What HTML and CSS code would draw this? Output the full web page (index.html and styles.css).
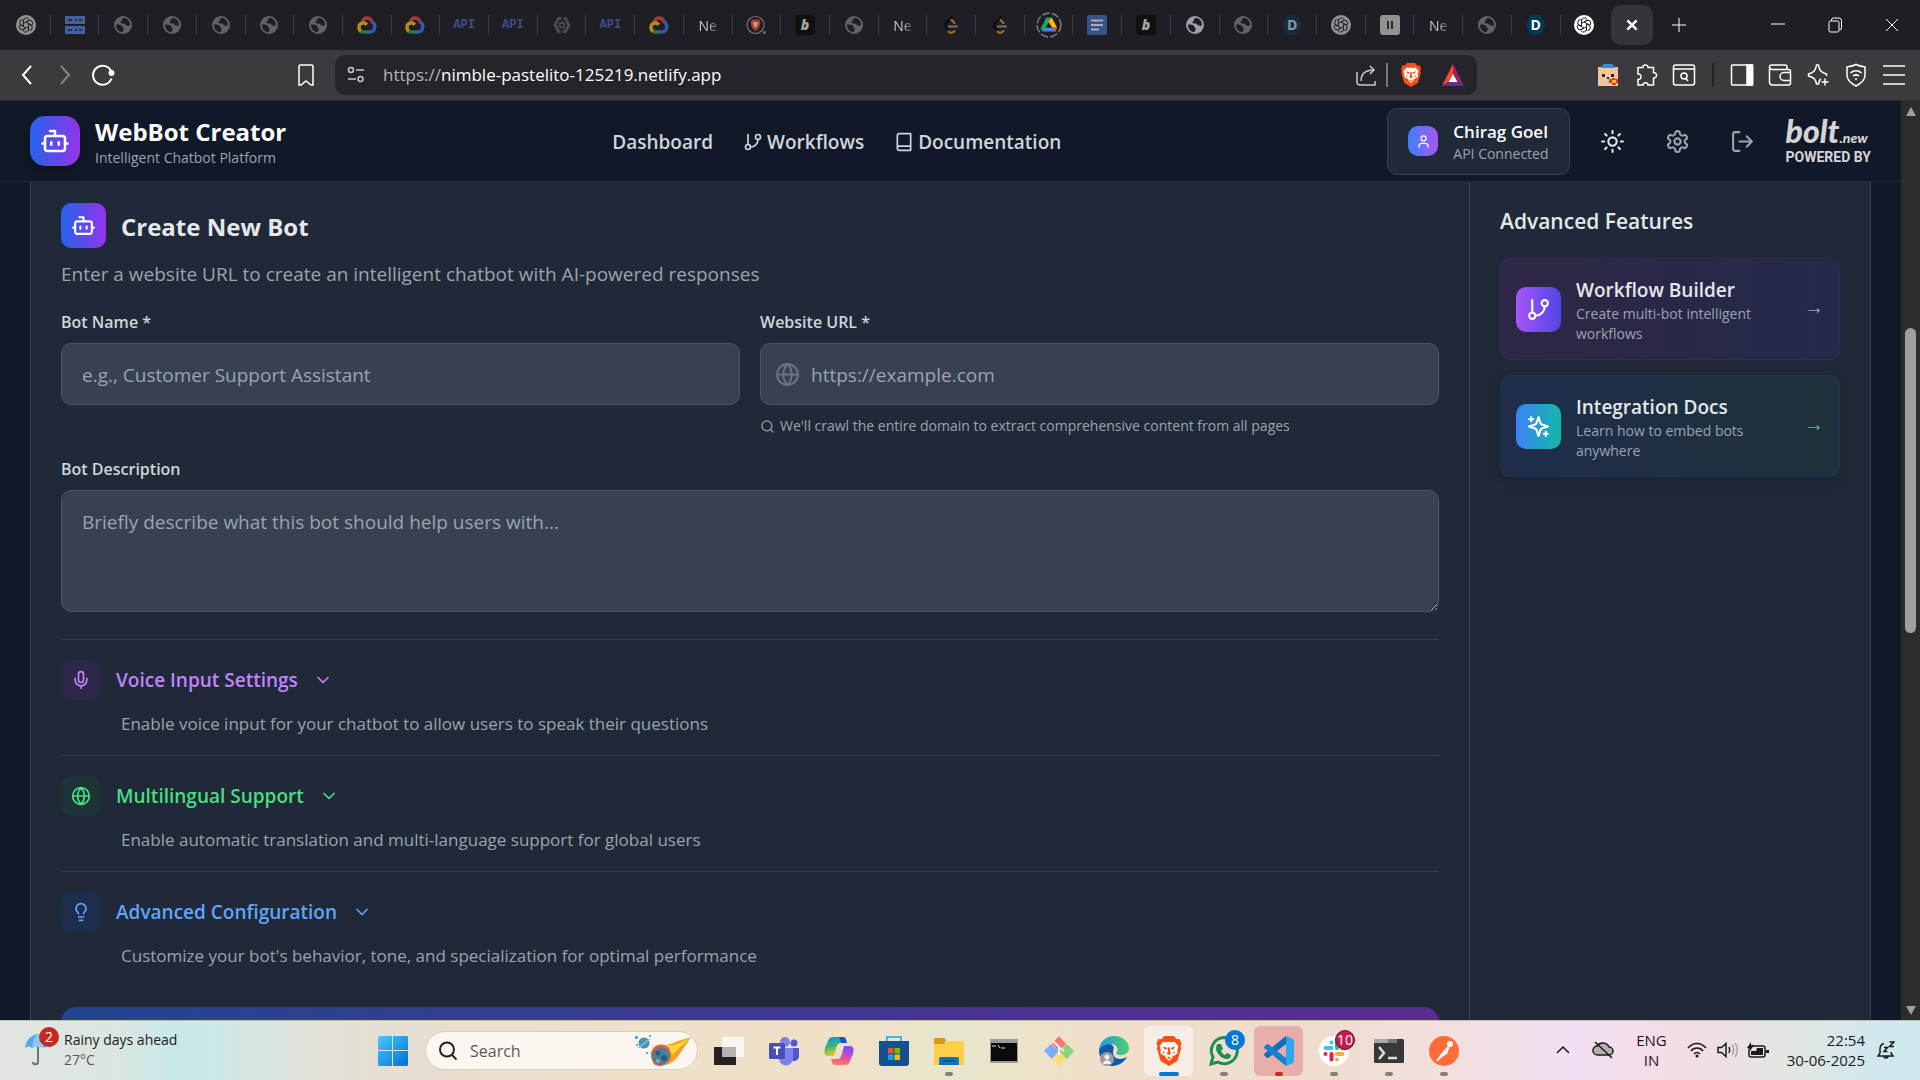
FILE: index.html
```html
<!DOCTYPE html>
<html lang="en">
<head>
  <meta charset="UTF-8">
  <meta name="viewport" content="width=device-width, initial-scale=1.0">
  <title>WebBot Creator</title>
  <link rel="stylesheet" href="styles.css">
</head>
<body>
  <!-- shared icons -->
  <svg class="sprite" aria-hidden="true">
    <symbol id="i-bot" viewBox="0 0 24 24"><path d="M12 8V4H8"/><rect x="4" y="8" width="16" height="12" rx="2"/><path d="M2 14h2M20 14h2M15 13v2M9 13v2"/></symbol>
    <symbol id="i-branch" viewBox="0 0 24 24"><path d="M6 3v12"/><circle cx="18" cy="6" r="3"/><circle cx="6" cy="18" r="3"/><path d="M18 9a9 9 0 0 1-9 9"/></symbol>
    <symbol id="i-book" viewBox="0 0 24 24"><path d="M4 19.5v-15A2.5 2.5 0 0 1 6.5 2H20v20H6.5a2.5 2.5 0 0 1 0-5H20"/></symbol>
    <symbol id="i-user" viewBox="0 0 24 24"><path d="M19 21v-2a4 4 0 0 0-4-4H9a4 4 0 0 0-4 4v2"/><circle cx="12" cy="7" r="4"/></symbol>
    <symbol id="i-sun" viewBox="0 0 24 24"><circle cx="12" cy="12" r="4"/><path d="M12 2v2M12 20v2M4.9 4.9l1.4 1.4M17.7 17.7l1.4 1.4M2 12h2M20 12h2M6.3 17.7l-1.4 1.4M19.1 4.9l-1.4 1.4"/></symbol>
    <symbol id="i-gear" viewBox="0 0 24 24"><path d="M12.22 2h-.44a2 2 0 0 0-2 2v.18a2 2 0 0 1-1 1.73l-.43.25a2 2 0 0 1-2 0l-.15-.08a2 2 0 0 0-2.73.73l-.22.38a2 2 0 0 0 .73 2.73l.15.1a2 2 0 0 1 1 1.72v.51a2 2 0 0 1-1 1.74l-.15.09a2 2 0 0 0-.73 2.73l.22.38a2 2 0 0 0 2.73.73l.15-.08a2 2 0 0 1 2 0l.43.25a2 2 0 0 1 1 1.73V20a2 2 0 0 0 2 2h.44a2 2 0 0 0 2-2v-.18a2 2 0 0 1 1-1.73l.43-.25a2 2 0 0 1 2 0l.15.08a2 2 0 0 0 2.73-.73l.22-.39a2 2 0 0 0-.73-2.73l-.15-.08a2 2 0 0 1-1-1.74v-.5a2 2 0 0 1 1-1.74l.15-.09a2 2 0 0 0 .73-2.73l-.22-.38a2 2 0 0 0-2.73-.73l-.15.08a2 2 0 0 1-2 0l-.43-.25a2 2 0 0 1-1-1.73V4a2 2 0 0 0-2-2z"/><circle cx="12" cy="12" r="3"/></symbol>
    <symbol id="i-logout" viewBox="0 0 24 24"><path d="M9 21H5a2 2 0 0 1-2-2V5a2 2 0 0 1 2-2h4M16 17l5-5-5-5M21 12H9"/></symbol>
    <symbol id="i-globe" viewBox="0 0 24 24"><circle cx="12" cy="12" r="10"/><path d="M12 2a14.5 14.5 0 0 0 0 20 14.5 14.5 0 0 0 0-20M2 12h20"/></symbol>
    <symbol id="i-search" viewBox="0 0 24 24"><circle cx="11" cy="11" r="8"/><path d="m21 21-4.3-4.3"/></symbol>
    <symbol id="i-mic" viewBox="0 0 24 24"><path d="M12 2a3 3 0 0 0-3 3v7a3 3 0 0 0 6 0V5a3 3 0 0 0-3-3zM19 10v2a7 7 0 0 1-14 0v-2M12 19v3"/></symbol>
    <symbol id="i-bulb" viewBox="0 0 24 24"><path d="M15 14c.2-1 .7-1.7 1.5-2.5 1-.9 1.5-2.2 1.5-3.5A6 6 0 0 0 6 8c0 1 .2 2.2 1.5 3.5.7.7 1.3 1.5 1.5 2.5M9 18h6M10 22h4"/></symbol>
    <symbol id="i-down" viewBox="0 0 24 24"><path d="m6 9 6 6 6-6"/></symbol>
    <symbol id="i-sparkles" viewBox="0 0 24 24"><path d="m12 3-1.912 5.813a2 2 0 0 1-1.275 1.275L3 12l5.813 1.912a2 2 0 0 1 1.275 1.275L12 21l1.912-5.813a2 2 0 0 1 1.275-1.275L21 12l-5.813-1.912a2 2 0 0 1-1.275-1.275L12 3ZM5 3v4M19 17v4M3 5h4M17 19h4"/></symbol>

    <!-- favicons -->
    <symbol id="f-gpt" viewBox="0 0 20 20"><circle cx="10" cy="10" r="10" fill="currentColor"/><g fill="none" stroke="#1f1e24" stroke-width="1"><path id="petal" d="M7.500 8.500V6a3 3 0 0 1 5.500-1.700M10 7l3.500-2"/><use href="#petal" transform="rotate(60 10 10)"/><use href="#petal" transform="rotate(120 10 10)"/><use href="#petal" transform="rotate(180 10 10)"/><use href="#petal" transform="rotate(240 10 10)"/><use href="#petal" transform="rotate(300 10 10)"/><path d="m10 7 2.600 1.500v3L10 13l-2.600-1.500v-3z"/></g></symbol>
    <symbol id="f-server" viewBox="0 0 20 20"><path fill="#44619f" d="M0 1h20v8H0zM0 11h20v8H0z"/><path fill="none" stroke="#1f1e24" stroke-width="1.500" d="M3 5h4M10 5h2M14 5h3M3 15h4M10 15h2M14 15h3"/></symbol>
    <symbol id="f-world" viewBox="0 0 20 20"><circle cx="10" cy="10" r="9" fill="currentColor"/><path fill="#1f1e24" d="M3 9.500c2-.2 4 0 5.500 1 1.200.8.500 1.800 1.500 2.300 1.200.5 1 1.700.2 2.400-.5.500-.2 1.300-.7 2C5.500 17 2.800 13.500 3 9.500zM11.500 3c-2 .3-3 1.200-2.700 2.200.3 1-1.300.8-1.300 2 0 1.300 2 1.300 3.500 1.300 1.300 0 1 1.500 2.300 1.800 1.300.3 2.200 1 3.500.2C17.500 7 15 3.500 11.500 3z"/></symbol>
    <symbol id="f-cloud" viewBox="0 0 20 20"><g fill="none" stroke-width="3.500"><path stroke="#a33a34" d="M5.500 7.500C6 4.500 8 3 10.200 3s4 1.500 4.700 4"/><path stroke="#3359a8" d="M14.300 6.500c2 .8 3.500 3 3.500 5.200 0 3-2 5.300-5 5.300H10"/><path stroke="#2f7a3f" d="M10.500 17H6.500c-1 0-2-.3-2.800-1"/><path stroke="#b38a1c" d="M4 16.200C2.500 15.200 1.900 13.500 2 12c.2-2.500 2-4 4.500-4 1.500 0 2.500.7 3.500 1.700"/></g></symbol>
    <symbol id="f-nut" viewBox="0 0 20 20"><path fill="none" stroke="#4b4a4e" stroke-width="3" d="M9.500 3.500h-3L3 10l3.500 6.500h2M11.500 3.500h2L17 10l-3.500 6.500h-3"/><circle cx="10" cy="10" r="2.500" fill="none" stroke="#4b4a4e" stroke-width="2"/></symbol>
    <symbol id="f-bravedim" viewBox="0 0 20 20"><circle cx="9.500" cy="10" r="8.500" fill="none" stroke="#75747a" stroke-width="1.200"/><path fill="#a8432b" d="M6 4.500h7l1.500 3L13 13l-3.500 3L6 13 4.500 7.500z"/><path fill="#b9a39f" d="M7 7h5l-1 4-1.500 2L8 11z"/><circle cx="18.500" cy="17.500" r="1.500" fill="#75747a"/></symbol>
    <symbol id="f-leet" viewBox="0 0 20 20"><g fill="none" stroke-width="2" stroke-linecap="round"><path stroke="#0c0c0c" d="M11 2 4.500 8.500c-1 1-1 2.500 0 3.500l3 4"/><path stroke="#a8721d" d="m10.500 5 3 3M7.500 16.500c2 2 4 1.500 6-.5"/><path stroke="#77757a" d="M8 11.500h8"/></g></symbol>
    <symbol id="f-drive" viewBox="0 0 24 24"><circle cx="12" cy="12" r="11" fill="none" stroke="#77777c" stroke-width="1.500" stroke-dasharray="7 2"/><path fill="#1fa463" d="M9.500 5h5L8.500 15 6 18.500 4.500 15z"/><path fill="#ffba00" d="M14.500 5 19.500 14.500h-4.500L11.500 9z"/><path fill="#4285f4" d="M8 14.500h8L18.500 18H6.500z"/><path fill="#ea4335" d="M15.500 14.500h4L18 18z"/></symbol>
    <symbol id="f-docs" viewBox="0 0 20 20"><rect width="20" height="20" rx="2" fill="#34538f"/><path stroke="#a9acb5" stroke-width="2" d="M4 5.500h12M4 10h12M4 14.500h8"/></symbol>
    <symbol id="f-pause" viewBox="0 0 20 20"><rect width="20" height="20" rx="3" fill="#929194"/><path stroke="#1f1e24" stroke-width="1.800" d="M8 6v8M12 6v8"/></symbol>
    <symbol id="f-brave" viewBox="0 0 20 24"><path fill="#fb4f14" d="M6 0h8l2 2.500 2.500-.2L20 6l-.8 2 .5 2-3 10L10 24 3.300 20 .3 10l.5-2L0 6l1.500-3.700L4 2.500z"/><path fill="#fff" d="M5.500 4.500 8 5l2-.5L12 5l2.500-.5L17.500 8l-1 4 .5 1.500-2.500 2-2 .3.500 1.200-3 3-3-3 .5-1.200-2-.3-2.500-2 .5-1.500-1-4z"/><path fill="#fb4f14" d="m5 8.300 3.500 1-.3 1.200-1.700.3zM15 8.300l-3.500 1 .3 1.200 1.700.3zM9.300 9h1.400l.3 4 1 1-2 1.200L8 14l1-1zM5 12l2 1.500-1.500.5zM15 12l-2 1.500 1.500.5zM8.300 17.200 10 16.500l1.700.7L10 18.300z"/></symbol>
  </svg>

  <div class="tabstrip">
    <div class="tabs">
      <button class="tab dim" aria-label="ChatGPT"><svg><use href="#f-gpt"/></svg></button>
      <button class="tab" aria-label="Server"><svg><use href="#f-server"/></svg></button>
      <button class="tab world" aria-label="Site"><svg><use href="#f-world"/></svg></button>
      <button class="tab world" aria-label="Site"><svg><use href="#f-world"/></svg></button>
      <button class="tab world" aria-label="Site"><svg><use href="#f-world"/></svg></button>
      <button class="tab world" aria-label="Site"><svg><use href="#f-world"/></svg></button>
      <button class="tab world" aria-label="Site"><svg><use href="#f-world"/></svg></button>
      <button class="tab" aria-label="Cloud"><svg><use href="#f-cloud"/></svg></button>
      <button class="tab" aria-label="Cloud"><svg><use href="#f-cloud"/></svg></button>
      <button class="tab api">API</button>
      <button class="tab api">API</button>
      <button class="tab" aria-label="Console"><svg><use href="#f-nut"/></svg></button>
      <button class="tab api">API</button>
      <button class="tab" aria-label="Cloud"><svg><use href="#f-cloud"/></svg></button>
      <button class="tab new">Ne</button>
      <button class="tab" aria-label="Brave"><svg><use href="#f-bravedim"/></svg></button>
      <button class="tab"><span class="b-icon">b</span></button>
      <button class="tab world" aria-label="Site"><svg><use href="#f-world"/></svg></button>
      <button class="tab new">Ne</button>
      <button class="tab" aria-label="LeetCode"><svg><use href="#f-leet"/></svg></button>
      <button class="tab" aria-label="LeetCode"><svg><use href="#f-leet"/></svg></button>
      <button class="tab drive" aria-label="Drive"><svg><use href="#f-drive"/></svg></button>
      <button class="tab" aria-label="Docs"><svg><use href="#f-docs"/></svg></button>
      <button class="tab"><span class="b-icon">b</span></button>
      <button class="tab world lit" aria-label="Site"><svg><use href="#f-world"/></svg></button>
      <button class="tab world" aria-label="Site"><svg><use href="#f-world"/></svg></button>
      <button class="tab"><span class="d-icon">D</span></button>
      <button class="tab dim" aria-label="ChatGPT"><svg><use href="#f-gpt"/></svg></button>
      <button class="tab" aria-label="Paused"><svg><use href="#f-pause"/></svg></button>
      <button class="tab new">Ne</button>
      <button class="tab world" aria-label="Site"><svg><use href="#f-world"/></svg></button>
      <button class="tab"><span class="d-icon d-lit">D</span></button>
      <button class="tab white" aria-label="ChatGPT"><svg><use href="#f-gpt"/></svg></button>
      <button class="tab active" aria-label="Close tab"><span><svg viewBox="0 0 12 12"><path d="m2 2 8 8M10 2l-8 8"/></svg></span></button>
    </div>
    <button class="new-tab" aria-label="New tab"><svg viewBox="0 0 16 16"><path d="M8 1v14M1 8h14"/></svg></button>
    <div class="window-controls">
      <button aria-label="Minimize"><svg viewBox="0 0 16 16"><path d="M1 7h14"/></svg></button>
      <button aria-label="Restore"><svg viewBox="0 0 16 16"><rect x="2" y="4" width="10" height="11" rx="1.500"/><path d="M4.500 4V3a2 2 0 0 1 2-2H12a2.500 2.500 0 0 1 2.500 2.500V11a2 2 0 0 1-2 2"/></svg></button>
      <button aria-label="Close"><svg viewBox="0 0 16 16"><path d="m2 2 12 12M14 2 2 14"/></svg></button>
    </div>
  </div>

  <div class="toolbar">
    <div class="nav-buttons">
      <button aria-label="Back"><svg viewBox="0 0 24 24"><path d="m16 3-8 9 8 9"/></svg></button>
      <button class="off" aria-label="Forward"><svg viewBox="0 0 24 24"><path d="m8 3 8 9-8 9"/></svg></button>
      <button aria-label="Reload"><svg viewBox="0 0 24 24"><path d="M20.500 15.500A9.500 9.500 0 1 1 20.500 9"/><circle cx="20.500" cy="10" r="2" fill="currentColor"/></svg></button>
    </div>
    <button class="bookmark" aria-label="Bookmark"><svg viewBox="0 0 24 24"><path d="M5 3.500A1.500 1.500 0 0 1 6.500 2h11A1.500 1.500 0 0 1 19 3.500V22h-2l-5-4-5 4H5z"/></svg></button>
    <div class="urlbar">
      <svg class="tune" viewBox="0 0 18 18"><circle cx="4" cy="4" r="2.500"/><path d="M9 4h8M1 13h8"/><circle cx="13.500" cy="13" r="2.500"/></svg>
      <span class="url"><i>https://</i>nimble-pastelito-125219.netlify.app</span>
      <button class="share" aria-label="Share"><svg viewBox="0 0 24 24"><path d="M3 9v10a3 3 0 0 0 3 3h15v-4M7 18c0-7 4-11 13-11M16 3l4 4-4 4"/></svg></button>
      <span class="bar"></span>
      <button class="shield" aria-label="Brave Shields"><svg><use href="#f-brave"/></svg></button>
      <button class="rewards" aria-label="Rewards"><svg viewBox="0 0 24 24"><path fill="#ff4724" d="M12 1 1 23l6-4 5-8z"/><path fill="#9e1f63" d="m12 1 11 22-6-4-5-8z"/><path fill="#662d91" d="M1 23h22l-6-4H7z"/><path fill="#fff" d="m12 11 4.500 8h-9z"/></svg></button>
    </div>
    <div class="extensions">
      <button aria-label="Extension"><svg viewBox="0 0 24 24"><path fill="#edc59f" stroke="none" d="M2 4h20v19H2z"/><path fill="#2b8ee0" stroke="none" d="M7 1h10v2h2v2H5V3h2z"/><path fill="#33241f" stroke="none" d="M6 11h3v3H6zM15 11h3v3h-3zM11 14h2v2h-2z"/><path fill="#e5392e" stroke="none" d="M13 16h3v-1h3v1h3v4h-2v2h-4v-2h-3z"/><path fill="#f7ba28" stroke="none" d="M16 17h4v3h-4z"/></svg></button>
      <button aria-label="Extensions"><svg viewBox="0 0 24 24"><path d="M4 4.500h5C8 1 14.500 1 14 4.500h5.500v5c4-.5 4 6 0 5.500v7H14c.5-3-5.500-3-5 0H4v-5.500c4 .5 4-6 0-5.500z"/></svg></button>
      <button aria-label="Search tabs"><svg viewBox="0 0 24 24"><rect x="1.500" y="2" width="21" height="20" rx="2"/><path d="M2 6h20"/><circle cx="12" cy="13" r="3"/><path d="m14 15.500 2 2.500"/></svg></button>
      <span class="bar"></span>
      <button aria-label="Side panel"><svg viewBox="0 0 24 24"><rect x="1.500" y="2" width="21" height="20" rx="1"/><path fill="currentColor" d="M17 2h5.500v20H17z"/></svg></button>
      <button aria-label="Wallet"><svg viewBox="0 0 24 24"><path d="M19 6.500V4a2 2 0 0 0-2-2H4a2 2 0 0 0-2.500 2v15a3 3 0 0 0 3 3h16a2 2 0 0 0 2-2V8.500a2 2 0 0 0-2-2H4a2.500 2.500 0 0 1-2.500-2M22 9.500h-6a4 4 0 0 0 0 8h6"/></svg></button>
      <button aria-label="Leo AI"><svg viewBox="0 0 24 24"><path d="M15 16c-1.500.8-2 2-2.500 5h-2c-.8-5-2.500-6.500-8-8v-2c5.500-1.500 7.200-3.500 8-9h2c.8 5.500 2.500 7.500 8 9v2M19 15.500v7M15.500 19h7"/></svg></button>
      <button aria-label="VPN"><svg viewBox="0 0 24 24"><path d="M12 1.500c3 1.500 6 2 9 2.500v8c0 5-4 8.500-9 11-5-2.500-9-6-9-11V4c3-.5 6-1 9-2.500z"/><path d="M6.500 10c3-3 8-3 11 0M9 13c2-1.500 4-1.500 6 0M11 16h2"/></svg></button>
      <button aria-label="Menu"><svg viewBox="0 0 24 24"><path d="M1 3h22M1 12h22M1 21h22"/></svg></button>
    </div>
  </div>

  <div class="viewport">
    <div class="page">
      <header class="site-header">
        <a class="brand" href="#">
          <span class="brand-icon"><svg class="icon"><use href="#i-bot"/></svg></span>
          <span>
            <strong>WebBot Creator</strong>
            <small>Intelligent Chatbot Platform</small>
          </span>
        </a>
        <nav class="site-nav">
          <a href="#">Dashboard</a>
          <a href="#"><svg class="icon"><use href="#i-branch"/></svg>Workflows</a>
          <a href="#"><svg class="icon"><use href="#i-book"/></svg>Documentation</a>
        </nav>
        <div class="header-actions">
          <div class="user-card">
            <span class="avatar"><svg class="icon"><use href="#i-user"/></svg></span>
            <div>
              <div class="user-name">Chirag Goel</div>
              <div class="user-status">API Connected</div>
            </div>
          </div>
          <button class="icon-btn light" aria-label="Theme"><svg class="icon"><use href="#i-sun"/></svg></button>
          <button class="icon-btn" aria-label="Settings"><svg class="icon"><use href="#i-gear"/></svg></button>
          <button class="icon-btn" aria-label="Sign out"><svg class="icon"><use href="#i-logout"/></svg></button>
          <a class="bolt" href="#"><span class="bolt-logo">bolt<small>.new</small></span><span class="powered">POWERED BY</span></a>
        </div>
      </header>

      <main class="card">
        <section class="creator">
          <div class="creator-title">
            <span class="title-icon"><svg class="icon"><use href="#i-bot"/></svg></span>
            <h2>Create New Bot</h2>
          </div>
          <p class="intro">Enter a website URL to create an intelligent chatbot with AI-powered responses</p>

          <form>
            <div class="form-row">
              <div class="field">
                <label for="bot-name">Bot Name *</label>
                <input id="bot-name" type="text" placeholder="e.g., Customer Support Assistant">
              </div>
              <div class="field">
                <label for="bot-url">Website URL *</label>
                <div class="url-input">
                  <svg class="icon"><use href="#i-globe"/></svg>
                  <input id="bot-url" type="url" placeholder="https://example.com">
                </div>
                <p class="hint"><svg class="icon"><use href="#i-search"/></svg>We'll crawl the entire domain to extract comprehensive content from all pages</p>
              </div>
            </div>
            <div class="field">
              <label for="bot-desc">Bot Description</label>
              <textarea id="bot-desc" placeholder="Briefly describe what this bot should help users with..."></textarea>
            </div>

            <div class="option purple">
              <button type="button"><span class="option-icon"><svg class="icon"><use href="#i-mic"/></svg></span>Voice Input Settings<svg class="icon chevron"><use href="#i-down"/></svg></button>
              <p>Enable voice input for your chatbot to allow users to speak their questions</p>
            </div>
            <div class="option green">
              <button type="button"><span class="option-icon"><svg class="icon"><use href="#i-globe"/></svg></span>Multilingual Support<svg class="icon chevron"><use href="#i-down"/></svg></button>
              <p>Enable automatic translation and multi-language support for global users</p>
            </div>
            <div class="option blue">
              <button type="button"><span class="option-icon"><svg class="icon"><use href="#i-bulb"/></svg></span>Advanced Configuration<svg class="icon chevron"><use href="#i-down"/></svg></button>
              <p>Customize your bot's behavior, tone, and specialization for optimal performance</p>
            </div>
            <button class="submit" type="submit" aria-label="Create bot"></button>
          </form>
        </section>

        <aside class="features">
          <h3>Advanced Features</h3>
          <a class="feature workflow" href="#">
            <span class="feature-icon"><svg class="icon"><use href="#i-branch"/></svg></span>
            <span class="feature-text"><strong>Workflow Builder</strong><small>Create multi-bot intelligent workflows</small></span>
            <span class="arrow">→</span>
          </a>
          <a class="feature docs" href="#">
            <span class="feature-icon"><svg class="icon"><use href="#i-sparkles"/></svg></span>
            <span class="feature-text"><strong>Integration Docs</strong><small>Learn how to embed bots anywhere</small></span>
            <span class="arrow">→</span>
          </a>
        </aside>
      </main>
    </div>

    <div class="scrollbar">
      <svg viewBox="0 0 12 10"><path d="M6 0 11 9H1z"/></svg>
      <div class="track"><div class="thumb"></div></div>
      <svg viewBox="0 0 12 10"><path d="M6 10 1 1h10z"/></svg>
    </div>
  </div>

  <footer class="taskbar">
    <div class="weather">
      <div class="weather-icon">
        <svg viewBox="0 0 26 36"><path fill="#58a9f0" d="M0 18C1 9 7 5 13 4c6 1 12 5 13 14-3-2-5-2-7 0-3-2-9-2-12 0-2-2-4-2-7 0z"/><path fill="#8cc8fb" d="M7 18C8 10 10 6 13 4c3 2 5 6 6 14-3-2-9-2-12 0z"/><path fill="none" stroke="#77736f" stroke-width="2" d="M13 17v15c0 3-5 3-5 0"/></svg>
        <span class="badge red">2</span>
      </div>
      <div>
        <div>Rainy days ahead</div>
        <div class="temp">27°C</div>
      </div>
    </div>

    <div class="apps">
      <button class="app start" aria-label="Start"><svg viewBox="0 0 30 30"><defs><linearGradient id="win" x2="1" y2="1"><stop offset="0" stop-color="#4cc9fb"/><stop offset="1" stop-color="#0070d2"/></linearGradient></defs><path fill="url(#win)" d="M1 0h13v14H0V1zM15 0h14l1 1v13H15zM0 15h14v15H1l-1-1zM15 15h15v14l-1 1H15z"/></svg></button>
      <label class="search">
        <svg class="glass" viewBox="0 0 20 20"><circle cx="9" cy="8.500" r="7"/><path d="m14 14 4.500 4.500"/></svg>
        <input type="search" placeholder="Search" aria-label="Search">
        <svg class="comet" viewBox="0 0 58 36"><path fill="#f7a021" d="M57 4 45 22c-3 5-8 9-14 10-8-1-11-10-6-16 5-5 11-4 16-7z"/><path fill="#fdd43c" d="M57 4 38 22 33 12c8 1 16-3 24-8z"/><path fill="#ef5e2a" d="M17 22c0-7 6-12 13-10 6 2 8 8 6 14-4 7-11 9-16 5-2-3-3-6-3-9z"/><circle cx="27" cy="23" r="9" fill="#4d7f9b"/><circle cx="24" cy="20" r="2.500" fill="#2f5b76"/><circle cx="30" cy="25" r="3" fill="#2f5b76"/><circle cx="24" cy="28" r="2" fill="#7fb0c8"/><circle cx="10" cy="10" r="5.500" fill="#4b93b8"/><path stroke="#8cc3dc" stroke-width="1.500" d="m4 15 12-9"/><path fill="#59aee0" d="M1 3h3v3H1zM15 2h2v2h-2zM2 11h2v2H2zM12 19h2v2h-2z"/></svg>
      </label>
      <button class="app" aria-label="Task view"><svg viewBox="0 0 30 30"><rect x="0" y="11" width="22" height="18" fill="#242322"/><rect x="8" y="1" width="22" height="20" rx="1" fill="#f5f5f2" opacity=".95"/><path fill="#b5b3b0" d="M8 11h14v10H8z"/></svg></button>
      <button class="app" aria-label="Teams"><svg viewBox="0 0 30 30"><circle cx="16" cy="6" r="5" fill="#7b83eb"/><circle cx="25" cy="7" r="3.500" fill="#5059c9"/><path fill="#5059c9" d="M20 12h10v9a5 5 0 0 1-8 3z"/><path fill="#7b83eb" d="M10 12h14v10a7 7 0 0 1-14 1z"/><rect y="7" width="16" height="16" rx="1.500" fill="#4650b8"/><path fill="none" stroke="#fff" stroke-width="2" d="M4.500 11.500h7M8 11.500V19"/></svg></button>
      <button class="app" aria-label="Copilot"><svg viewBox="0 0 30 30"><defs><linearGradient id="cp1" x2=".3" y2="1"><stop offset="0" stop-color="#0d8bf0"/><stop offset=".5" stop-color="#32b67a"/><stop offset="1" stop-color="#f3c52b"/></linearGradient><linearGradient id="cp2" x2="-.3" y2="1"><stop offset="0" stop-color="#8d4df0"/><stop offset=".5" stop-color="#f0588e"/><stop offset="1" stop-color="#fb9a4a"/></linearGradient></defs><path fill="url(#cp1)" d="M9 1h10c3 0 3 3 4 6h-6c-3 0-4 2-5 6l-2 7H4c-4 0-4-4-3-8L4 5c1-3 2-4 5-4z"/><path fill="url(#cp2)" d="M21 29H11c-3 0-3-3-4-6h6c3 0 4-2 5-6l2-7h6c4 0 4 4 3 8l-3 7c-1 3-2 4-5 4z"/><path fill="#1c54c8" d="M15 1h4c3 0 3 3 4 6h-6z"/></svg></button>
      <button class="app" aria-label="Store"><svg viewBox="0 0 30 30"><path fill="none" stroke="#36b9ef" stroke-width="2" d="M8 6V1h14v5"/><path fill="#14508d" d="M0 5h30v22a3 3 0 0 1-3 3H3a3 3 0 0 1-3-3z"/><path fill="#f25022" d="M9 12h5.500v5.500H9z"/><path fill="#7fba00" d="M15.500 12H21v5.500h-5.500z"/><path fill="#00a4ef" d="M9 18.500h5.500V24H9z"/><path fill="#ffb900" d="M15.500 18.500H21V24h-5.500z"/></svg></button>
      <button class="app open" aria-label="Explorer"><svg viewBox="0 0 30 30"><path fill="#d99a10" d="M0 3a1 1 0 0 1 1-1h9l3 3h-2v6H0z"/><path fill="#fdce47" d="M0 8h11l3-3h15a1 1 0 0 1 1 1v22a1 1 0 0 1-1 1H1a1 1 0 0 1-1-1z"/><path fill="#1272c4" d="M5 29v-6a2 2 0 0 1 2-2h16a2 2 0 0 1 2 2v6z"/><path stroke="#0a4c8b" stroke-width="1.500" d="M9 25h12"/></svg></button>
      <button class="app" aria-label="Terminal"><svg viewBox="0 0 30 30"><rect x="1" y="3" width="28" height="24" fill="#9b9b9b"/><path fill="#0a0a0a" d="M2 7h26v18H2z"/><path stroke="#ddd" d="M4 9v2M6 9v2M9 9l2 3M12 12h4"/></svg></button>
      <button class="app" aria-label="Git"><svg viewBox="0 0 30 30"><path fill="#f2766d" d="m15 0 7 8-7 7-7-7z"/><path fill="#7eaefb" d="m7 8 8 7-7 8-8-8z"/><path fill="#8fce7b" d="m23 8 7 7-7 8-8-8z"/><path fill="#fbdf70" d="m15 15 7 8-7 7-7-7z"/><path stroke="#eee" stroke-width="2" fill="none" d="m9 5 6 6v8M15 11l5 4"/></svg></button>
      <button class="app" aria-label="Edge"><svg viewBox="0 0 30 30"><defs><linearGradient id="edge" x2="1"><stop offset="0" stop-color="#1a9be0"/><stop offset="1" stop-color="#54d06a"/></linearGradient></defs><path fill="#0f5ba7" d="M0 14c2-6 8-8 13-5 3 2 1 5 1 8 1 7 8 7 14 4-4 7-10 9-16 9C5 29 0 22 0 14z"/><path fill="url(#edge)" d="M0 15C0 6 7 0 15 0c9 0 15 6 15 12 0 5-4 7-8 7s-6-1-4-3c2-4-1-8-6-8-6 0-11 3-12 7z"/><circle cx="8" cy="23" r="7" fill="#9b9b99"/><circle cx="8" cy="21" r="2.500" fill="#eee"/><path fill="#eee" d="M4 28c0-5 8-5 8 0z"/></svg></button>
      <button class="app open current" aria-label="Brave"><svg><use href="#f-brave"/></svg></button>
      <button class="app open" aria-label="WhatsApp"><svg viewBox="0 0 30 30"><path fill="none" stroke="#1c8d55" stroke-width="3" d="m2 28 2-7a13 13 0 1 1 5 5z"/><path fill="#1c8d55" d="m9 8 3 0 2 5-2 2c1 2 2 3 4 4l2-2 4 2c0 3-2 4-5 4-5-1-9-5-10-10 0-3 1-5 2-5z"/></svg><span class="badge sky">8</span></button>
      <button class="app open alert" aria-label="VS Code"><svg viewBox="0 0 30 30"><path fill="#0c70b8" d="M22 0v8L4 22H3l-3-3v-1z"/><path fill="#1583cf" d="M0 11l3-3h1l18 14v8L0 12z"/><path fill="#2ba6f0" d="m22 0 7 3 1 1v22l-1 1-7 3z"/></svg></button>
      <button class="app open" aria-label="Slack"><svg viewBox="0 0 30 30"><circle cx="15" cy="15" r="15" fill="#fff"/><g fill="none" stroke-width="4" stroke-linecap="round"><path stroke="#36c5f0" d="M12.500 6.500h0M6.500 12h6"/><path stroke="#2eb67d" d="M18 6.500V12M23.500 12h0"/><path stroke="#e01e5a" d="M6.500 18h0M12.500 18v5.500"/><path stroke="#ecb22e" d="M18 23.500h0M18 18h5.500"/></g></svg><span class="badge crimson">10</span></button>
      <button class="app open" aria-label="Windows Terminal"><svg viewBox="0 0 30 30"><rect y="3" width="30" height="24" rx="1.500" fill="#373737"/><path fill="#aaa" d="M0 4a1 1 0 0 1 1-1h13v4H0z"/><path fill="#777" d="M14 3h9v4h-9z"/><path fill="none" stroke="#ddd" stroke-width="2.500" d="m5 11 5 6-5 6M14 22h9"/></svg></button>
      <button class="app open" aria-label="Postman"><svg viewBox="0 0 30 30"><circle cx="15" cy="15" r="15" fill="#ff6c37"/><circle cx="21" cy="8" r="3" fill="#fff"/><path fill="none" stroke="#fff" stroke-width="3" stroke-linecap="round" d="m19 12-6 7"/><path fill="none" stroke="#fff" stroke-width="1.500" d="m19 11-1 6-6 4-4 4 4-6"/></svg></button>
    </div>

    <div class="tray">
      <svg class="up" viewBox="0 0 14 8"><path d="m1 7 6-6 6 6"/></svg>
      <svg class="cloud-off" viewBox="0 0 22 18"><path fill="#b4b0b0" d="M6 14a4.500 4.500 0 0 1-1-9 7 7 0 0 1 12 1 4 4 0 0 1 0 8z"/><path d="m3 1 17 16"/></svg>
      <div class="lang"><div>ENG</div><div>IN</div></div>
      <svg class="wifi" viewBox="0 0 20 16"><path d="M1 6c5-6 13-6 18 0M4 9c3-4 9-4 12 0M7 12c2-2 4-2 6 0"/><circle cx="10" cy="14" r="1.500" fill="currentColor" stroke="none"/></svg>
      <svg class="volume" viewBox="0 0 22 16"><path d="M1 5.500h3.500L9 1.500v13l-4.500-4H1zM12 5c1 2 1 4 0 6"/><path opacity=".3" d="M15 3c2 3 2 7 0 10M18 1c3 4 3 10 0 14"/></svg>
      <svg class="battery" viewBox="0 0 22 16"><rect x="2" y="4" width="16" height="11" rx="2"/><path fill="currentColor" stroke="none" d="M4 13V9h5l1-3h6v7zM19 8h3v3h-3z"/><path fill="currentColor" stroke="none" d="M4 0 0 6h3v3l4-6H4z"/></svg>
      <div class="clock"><div>22:54</div><div>30-06-2025</div></div>
      <svg class="bell" viewBox="0 0 18 18"><path d="M7 2.500a5.500 5.500 0 0 0-4 5V12l-2 3h15l-2-3v-1M7 15c0 2.500 4 2.500 4 0M7 6.500h3.500L7 10.500h3.500M12.500 1H17l-4.500 4.500H17"/></svg>
    </div>
  </footer>
</body>
</html>
```

FILE: styles.css
```css
* {
  box-sizing: border-box;
}
body {
  margin: 0;
  height: 100vh;
  display: flex;
  flex-direction: column;
  overflow: hidden;
  font-family: 'Open Sans', 'Noto Sans', sans-serif;
  font-size: 15px;
  background: #111827;
  color: #e5e7eb;
}
button, input, textarea {
  font: inherit;
}
button {
  display: flex;
  align-items: center;
  justify-content: center;
  border: none;
  padding: 0;
  background: none;
  color: inherit;
  cursor: pointer;
}
a {
  color: inherit;
  text-decoration: none;
}
h2, h3, p {
  margin: 0;
}
svg {
  flex: none;
}
.sprite {
  position: absolute;
  width: 0;
  height: 0;
}
.icon {
  width: 20px;
  height: 20px;
  fill: none;
  stroke: currentColor;
  stroke-width: 2;
  stroke-linecap: round;
  stroke-linejoin: round;
}

/* browser tabs */
.tabstrip {
  flex: none;
  display: flex;
  height: 50px;
  background: #1f1e24;
}
.tabs {
  flex: 1;
  display: flex;
  align-items: center;
  padding-left: 2px;
}
.tab {
  flex: 1 1 0;
  min-width: 0;
  height: 20px;
  border-right: 1px solid #3e3d43;
}
.tab svg {
  width: 20px;
  height: 20px;
}
.tab.dim { color: #929194; }
.tab.white { color: #fff; border-right: none; }
.tab.world { color: #5f6368; }
.tab.lit { color: #9aa0a6; }
.tab.drive svg {
  width: 26px;
  height: 26px;
}
.tab.api {
  font-family: 'Liberation Mono', monospace;
  font-size: 12px;
  font-weight: 700;
  color: #3d4e88;
}
.tab.new {
  font-size: 14px;
  background: linear-gradient(90deg, #d0d0d2 50%, #3e3d43 72%);
  background-clip: text;
  -webkit-background-clip: text;
  color: transparent;
}
.b-icon {
  width: 20px;
  height: 20px;
  border-radius: 4px;
  background: #101010;
  color: #a5a5a5;
  font-size: 14px;
  font-weight: 800;
  font-style: italic;
  line-height: 19px;
}
.d-icon {
  width: 20px;
  height: 20px;
  background: #152e3b;
  color: #8f999e;
  clip-path: polygon(25% 0, 75% 0, 100% 50%, 75% 100%, 25% 100%, 0 50%);
  font-size: 14px;
  font-weight: 700;
  line-height: 20px;
}
.d-lit {
  background: #003a52;
  color: #fff;
}
.tab.active {
  border: none;
}
.tab.active span {
  display: flex;
  align-items: center;
  justify-content: center;
  width: 42px;
  height: 40px;
  border-radius: 10px;
  background: #35343a;
}
.tab.active svg {
  width: 14px;
  height: 14px;
  stroke: #fff;
  stroke-width: 2;
}
.new-tab {
  width: 46px;
}
.new-tab svg, .window-controls svg {
  width: 16px;
  height: 16px;
  fill: none;
  stroke: #fff;
}
.window-controls {
  display: flex;
  margin-left: 47px;
}
.window-controls button {
  width: 57px;
}

/* toolbar */
.toolbar {
  flex: none;
  display: flex;
  align-items: center;
  height: 51px;
  padding: 0 14px 0 15px;
  background: #3b3a3f;
  border-bottom: 1px solid #2d2c30;
  color: #fff;
}
.toolbar svg {
  width: 24px;
  height: 24px;
  fill: none;
  stroke: currentColor;
  stroke-width: 1.5;
}
.nav-buttons {
  display: flex;
  gap: 14px;
}
.nav-buttons svg {
  stroke-width: 2;
}
.nav-buttons .off {
  color: #858489;
}
.bookmark {
  margin-left: 179px;
  margin-right: 17px;
}
.urlbar {
  width: 1142px;
  min-width: 0;
  display: flex;
  align-items: center;
  height: 40px;
  padding: 0 12px;
  border-radius: 10px;
  background: #25242a;
}
.urlbar .tune {
  width: 18px;
  height: 18px;
  color: #c9c9cc;
}
.url {
  flex: 1;
  margin-left: 18px;
  font-size: 17px;
  line-height: 22px;
}
.url i {
  font-style: normal;
  color: #b5b5b8;
}
.share {
  color: #c9c9cc;
}
.bar {
  width: 2px;
  height: 24px;
  background: #77767b;
  margin: 0 13px 0 8px;
}
.toolbar .shield svg {
  width: 20px;
  height: 24px;
  stroke: none;
}
.toolbar .rewards svg {
  stroke: none;
}
.rewards {
  margin-left: 20px;
}
.extensions {
  flex: 1;
  display: flex;
  justify-content: flex-end;
  align-items: center;
  gap: 14px;
}
.extensions .bar {
  margin: 0 2px;
  background: #232227;
}

/* page */
.viewport {
  flex: 1;
  min-height: 0;
  display: flex;
}
.page {
  flex: 1;
  min-width: 0;
  overflow: hidden;
}
.site-header {
  display: flex;
  align-items: center;
  justify-content: space-between;
  height: 81px;
  padding: 0 30px;
  border-bottom: 1px solid #1f2937;
}
.brand {
  display: flex;
  align-items: center;
  gap: 15px;
}
.brand-icon {
  display: flex;
  align-items: center;
  justify-content: center;
  width: 50px;
  height: 50px;
  border-radius: 15px;
  background: linear-gradient(90deg, #2563eb, #9333ea);
  box-shadow: 0 4px 8px rgba(0, 0, 0, 0.3);
  color: #fff;
}
.brand-icon .icon {
  width: 30px;
  height: 30px;
}
.brand strong, .brand small {
  display: block;
}
.brand strong {
  padding-top: 4px;
  font-size: 24px;
  line-height: 30px;
  color: #fff;
}
.brand small {
  font-size: 14px;
  line-height: 22px;
  color: #9ca3af;
}
.site-nav {
  display: flex;
  gap: 30px;
  padding-top: 2px;
}
.site-nav a {
  display: flex;
  align-items: center;
  gap: 4px;
  font-size: 19px;
  font-weight: 600;
  color: #d1d5db;
}
.header-actions {
  display: flex;
  align-items: center;
  gap: 15px;
}
.user-card {
  display: flex;
  align-items: center;
  gap: 15px;
  height: 67px;
  margin-right: 3px;
  padding: 0 20px;
  border: 1px solid #374151;
  border-radius: 10px;
  background: #1f2937;
}
.avatar {
  display: flex;
  align-items: center;
  justify-content: center;
  width: 30px;
  height: 30px;
  border-radius: 10px;
  background: linear-gradient(90deg, #3b82f6, #a855f7);
  color: #fff;
}
.avatar .icon {
  width: 15px;
  height: 15px;
}
.user-name {
  padding-top: 2px;
  font-size: 17px;
  font-weight: 600;
  line-height: 24px;
  color: #fff;
}
.user-status {
  font-size: 14px;
  line-height: 20px;
  color: #9ca3af;
}
.icon-btn {
  width: 50px;
  height: 50px;
  color: #9ca3af;
}
.icon-btn.light {
  color: #e5e7eb;
}
.icon-btn .icon {
  width: 25px;
  height: 25px;
}
.bolt {
  margin-left: 3px;
  color: #d5d5d7;
}
.bolt-logo, .powered {
  display: block;
}
.bolt-logo {
  font-family: Lato, sans-serif;
  font-size: 32px;
  font-weight: 900;
  font-style: italic;
  line-height: 24px;
}
.bolt-logo small {
  font-size: 14px;
}
.powered {
  font-family: Roboto, sans-serif;
  font-size: 14px;
  font-weight: 700;
  line-height: 14px;
}
.card {
  display: flex;
  height: 900px;
  margin: 0 30px;
  border: 1px solid #374151;
  border-top: none;
  background: #1f2937;
}
.creator {
  flex: 1;
  min-width: 0;
  padding: 21px 30px;
}
.creator-title {
  display: flex;
  align-items: center;
  gap: 15px;
}
.title-icon, .feature-icon {
  flex: none;
  display: flex;
  align-items: center;
  justify-content: center;
  width: 45px;
  height: 45px;
  border-radius: 10px;
  background: linear-gradient(90deg, #2563eb, #9333ea);
  color: #fff;
}
.title-icon .icon, .feature-icon .icon {
  width: 25px;
  height: 25px;
}
h2 {
  padding-top: 2px;
  font-size: 24px;
  font-weight: 700;
  color: #e5e7eb;
}
.intro {
  margin: 11px 0 20px;
  font-size: 19px;
  line-height: 30px;
  color: #9ca3af;
}
.form-row {
  display: grid;
  grid-template-columns: 1fr 1fr;
  gap: 20px;
  margin-bottom: 19px;
}
label {
  display: block;
}
.field label {
  margin-bottom: 8px;
  font-size: 16px;
  font-weight: 600;
  line-height: 26px;
  color: #d1d5db;
}
.field input, textarea {
  display: block;
  width: 100%;
  height: 62px;
  padding: 1px 20px 0;
  border: 1px solid #4b5563;
  border-radius: 10px;
  background: #374151;
  color: #fff;
  font-size: 19px;
}
.field input::placeholder, textarea::placeholder {
  color: #9ca3af;
}
.url-input {
  position: relative;
}
.url-input .icon {
  position: absolute;
  left: 15px;
  top: 19px;
  width: 25px;
  height: 25px;
  color: #6b7280;
}
.url-input input {
  padding-left: 50px;
}
.hint {
  display: flex;
  align-items: center;
  gap: 5px;
  margin-top: 10px;
  font-size: 14px;
  line-height: 22px;
  color: #9ca3af;
}
.hint .icon {
  width: 15px;
  height: 15px;
}
textarea {
  height: 122px;
  padding: 16px 20px;
  line-height: 30px;
}
.option {
  height: 116px;
  padding-top: 20px;
  border-top: 1px solid #374151;
}
.field + .option {
  margin-top: 27px;
}
.option button {
  font-size: 19px;
  font-weight: 600;
}
.option-icon {
  display: flex;
  align-items: center;
  justify-content: center;
  width: 40px;
  height: 40px;
  margin-right: 15px;
  border-radius: 10px;
}
.option .chevron {
  margin-left: 15px;
}
.option p {
  margin: 10px 0 0 60px;
  font-size: 17px;
  line-height: 28px;
  color: #9ca3af;
}
.purple button { color: #c084fc; }
.purple .option-icon { background: #2d2849; }
.green button { color: #4ade80; }
.green .option-icon { background: #1d3338; }
.blue button { color: #60a5fa; }
.blue .option-icon { background: #1e2d4b; }
.submit {
  width: 100%;
  height: 70px;
  margin-top: 20px;
  border-radius: 15px;
  background: linear-gradient(90deg, #224590, #5b2c90);
}
.features {
  flex: none;
  width: 401px;
  padding: 21px 30px;
  border-left: 1px solid #374151;
}
h3 {
  margin-bottom: 19px;
  font-size: 21px;
  font-weight: 600;
  line-height: 36px;
}
.feature {
  display: flex;
  align-items: center;
  height: 102px;
  margin-bottom: 15px;
  padding: 0 15px;
  border: 1px solid #3c2463;
  border-radius: 10px;
  background: linear-gradient(90deg, #2e2745, #232a48);
}
.feature.docs {
  border-color: #1e3260;
  background: linear-gradient(90deg, #1f2d4b, #1f313a);
  box-shadow: 0 4px 8px rgba(0, 0, 0, 0.15);
}
.workflow .feature-icon { background: linear-gradient(90deg, #a855f7, #4f46e5); }
.docs .feature-icon { background: linear-gradient(90deg, #3b82f6, #14b8a6); }
.feature-text {
  flex: 1;
  margin-left: 15px;
  padding-top: 2px;
}
.feature strong, .feature small {
  display: block;
}
.feature strong {
  font-size: 19px;
  font-weight: 600;
  line-height: 28px;
}
.feature small {
  max-width: 200px;
  font-size: 14px;
  line-height: 20px;
  color: #9ca3af;
}
.arrow {
  padding-bottom: 4px;
  font-size: 20px;
  line-height: 24px;
  color: #c084fc;
}
.docs .arrow {
  color: #60a5fa;
}
.scrollbar {
  flex: none;
  display: flex;
  flex-direction: column;
  align-items: center;
  width: 19px;
  padding: 6px 0 5px;
  background: #2c2c2c;
}
.scrollbar svg {
  width: 12px;
  height: 10px;
  fill: #9f9f9f;
}
.track {
  flex: 1;
  width: 11px;
  padding-top: 211px;
}
.thumb {
  height: 45%;
  border-radius: 6px;
  background: #9f9f9f;
}

/* taskbar */
.taskbar {
  flex: none;
  display: flex;
  align-items: center;
  height: 60px;
  border-top: 1px solid #c5beb2;
  background: linear-gradient(90deg, #e2e5df 0%, #dbe6e1 6%, #c8e8ea 9%, #cce8e8 11%, #e3e0d6 17%, #e8ddcf 23%, #efe0c9 33%, #efe1c8 44%, #e7e6cc 50%, #f0dfca 57%, #efddcf 68%, #f2e0e0 76%, #f2dff3 82%, #f3dde2 88%, #e2e6e1 93%, #cfe8ee 98%);
  color: #1a1a1a;
}
.weather {
  width: 365px;
  display: flex;
  align-items: center;
  gap: 12px;
  padding: 0 0 2px 25px;
  line-height: 20px;
  font-size: 14px;
}
.temp {
  color: #5b5855;
}
.weather-icon {
  position: relative;
  width: 27px;
  height: 40px;
}
.weather-icon svg {
  width: 26px;
  height: 36px;
}
.badge {
  position: absolute;
  min-width: 20px;
  height: 20px;
  border-radius: 10px;
  color: #fff;
  font-size: 14px;
  line-height: 20px;
  text-align: center;
}
.badge.red {
  top: -3px;
  left: 14px;
  background: #c42b1c;
}
.badge.sky, .badge.crimson {
  top: 4px;
  right: 6px;
  background: #0078d4;
}
.badge.crimson {
  background: #c8184c;
  border: 1px solid #5e1430;
  line-height: 18px;
}
.apps {
  display: flex;
  align-items: center;
}
.app {
  position: relative;
  width: 55px;
  height: 50px;
}
.app svg {
  width: 30px;
  height: 30px;
}
.start {
  margin-right: 5px;
}
.app.open::after {
  content: '';
  position: absolute;
  bottom: 0;
  width: 8px;
  height: 4px;
  border-radius: 2px;
  background: #85807a;
}
.app.current, .app.alert {
  width: 49px;
  margin: 0 3px;
  border-radius: 6px;
  background: #f6ede4;
}
.app.current::after {
  width: 20px;
  background: #0078d4;
}
.app.alert {
  background: #e9aeaa;
}
.app.alert::after {
  background: #c42b1c;
}
.search {
  display: flex;
  align-items: center;
  width: 273px;
  height: 39px;
  margin-right: 3px;
  padding: 0 5px 0 12px;
  border: 1px solid #d9cdbb;
  border-radius: 20px;
  background: #fbf6f0;
}
.search input {
  flex: 1;
  min-width: 0;
  margin: 0 0 0 8px;
  padding: 0 4px;
  border: none;
  background: none;
  font-size: 16px;
}
.search input::placeholder {
  color: #5c5955;
}
.glass {
  width: 20px;
  height: 20px;
  fill: none;
  stroke: #222;
  stroke-width: 2;
}
.comet {
  width: 58px;
  height: 36px;
}
.tray {
  display: flex;
  align-items: center;
  margin-left: auto;
  padding: 0 25px 2px 0;
  font-size: 15px;
  line-height: 20px;
}
.tray svg {
  height: 18px;
  fill: none;
  stroke: currentColor;
  stroke-width: 1.5;
}
.tray .up { width: 14px; height: 8px; }
.cloud-off { width: 22px; margin: 0 22px; }
.wifi { width: 20px; margin-left: 20px; }
.volume { width: 22px; margin: 0 8px 0 10px; }
.battery { width: 22px; margin-right: 18px; }
.bell { width: 18px; margin-left: 12px; }
.lang {
  text-align: center;
}
.clock {
  text-align: right;
}
```
